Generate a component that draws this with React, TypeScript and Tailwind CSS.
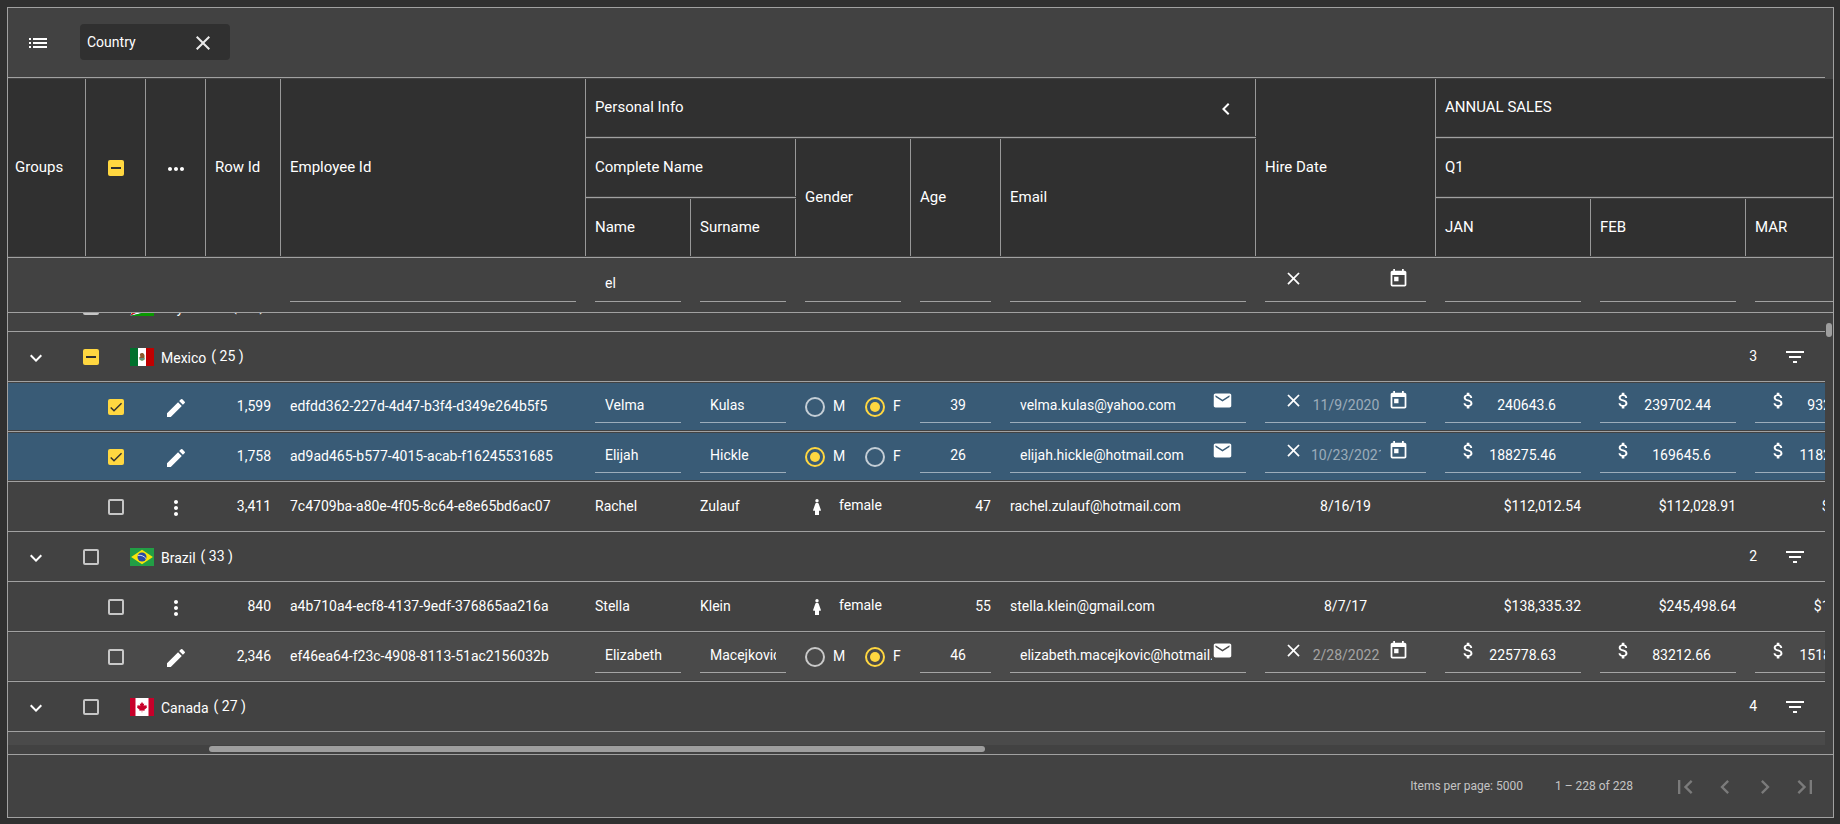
import React, { useEffect, useRef } from "react";
import {
  MdAttachMoney,
  MdChevronLeft,
  MdChevronRight,
  MdClose,
  MdCreate,
  MdEmail,
  MdExpandMore,
  MdFilterList,
  MdFirstPage,
  MdLastPage,
  MdList,
  MdMoreHoriz,
  MdMoreVert,
  MdToday,
} from "react-icons/md";

type Gender = "M" | "F";

interface Employee {
  kind: "row";
  rowId: string;
  id: string;
  name: string;
  surname: string;
  gender: Gender;
  age: number;
  email: string;
  hired: string;
  sales: [string, string, string];
  editing?: boolean;
  selected?: boolean;
  striped?: boolean;
}

interface Group {
  kind: "group";
  country: string;
  total: number;
  filtered: number;
  partial?: boolean;
}

const rows: (Employee | Group)[] = [
  { kind: "group", country: "Seychelles", total: 21, filtered: 0 },
  { kind: "group", country: "Mexico", total: 25, filtered: 3, partial: true },
  {
    kind: "row", rowId: "1,599", id: "edfdd362-227d-4d47-b3f4-d349e264b5f5", name: "Velma", surname: "Kulas",
    gender: "F", age: 39, email: "velma.kulas@yahoo.com", hired: "11/9/2020",
    sales: ["240643.6", "239702.44", "93216.42"], editing: true, selected: true,
  },
  {
    kind: "row", rowId: "1,758", id: "ad9ad465-b577-4015-acab-f16245531685", name: "Elijah", surname: "Hickle",
    gender: "M", age: 26, email: "elijah.hickle@hotmail.com", hired: "10/23/2021",
    sales: ["188275.46", "169645.6", "118254.31"], editing: true, selected: true,
  },
  {
    kind: "row", rowId: "3,411", id: "7c4709ba-a80e-4f05-8c64-e8e65bd6ac07", name: "Rachel", surname: "Zulauf",
    gender: "F", age: 47, email: "rachel.zulauf@hotmail.com", hired: "8/16/19",
    sales: ["$112,012.54", "$112,028.91", "$94,310.27"],
  },
  { kind: "group", country: "Brazil", total: 33, filtered: 2 },
  {
    kind: "row", rowId: "840", id: "a4b710a4-ecf8-4137-9edf-376865aa216a", name: "Stella", surname: "Klein",
    gender: "F", age: 55, email: "stella.klein@gmail.com", hired: "8/7/17",
    sales: ["$138,335.32", "$245,498.64", "$130,274.05"],
  },
  {
    kind: "row", rowId: "2,346", id: "ef46ea64-f23c-4908-8113-51ac2156032b", name: "Elizabeth", surname: "Macejkovic",
    gender: "F", age: 46, email: "elizabeth.macejkovic@hotmail.com", hired: "2/28/2022",
    sales: ["225778.63", "83212.66", "151820.76"], editing: true, striped: true,
  },
  { kind: "group", country: "Canada", total: 27, filtered: 4 },
];

function Columns() {
  return (
    <colgroup>
      <col className="w-[78px]" />
      <col className="w-[60px]" />
      <col className="w-[60px]" />
      <col className="w-[75px]" />
      <col className="w-[305px]" />
      <col className="w-[105px]" />
      <col className="w-[105px]" />
      <col className="w-[115px]" />
      <col className="w-[90px]" />
      <col className="w-[255px]" />
      <col className="w-[180px]" />
      <col className="w-[155px]" />
      <col className="w-[155px]" />
      <col className="w-[155px]" />
    </colgroup>
  );
}

function Checkbox({ label, state = "off" }: { label: string; state?: "off" | "on" | "mixed" }) {
  const ref = useRef<HTMLInputElement>(null);
  useEffect(() => {
    if (ref.current) ref.current.indeterminate = state === "mixed";
  }, [state]);
  return (
    <span className="relative block size-4 shrink-0">
      <input
        ref={ref}
        type="checkbox"
        aria-label={label}
        defaultChecked={state === "on"}
        className={`block size-4 appearance-none rounded-xs ${state === "off" ? "border-2 border-white/70" : "bg-[#ffd740]"}`}
      />
      {state !== "off" && (
        <svg viewBox="0 0 24 24" className="pointer-events-none absolute inset-0 size-4" fill="none" stroke="#303030">
          {state === "on" ? (
            <path d="M4.1 12.7 9 17.6 20.3 6.3" strokeWidth="2.2" />
          ) : (
            <path d="M4.5 12h15" strokeWidth="3" />
          )}
        </svg>
      )}
    </span>
  );
}

function Flag({ country }: { country: string }) {
  return (
    <svg viewBox="0 0 24 18" className="h-[18px] w-6 shrink-0" aria-hidden="true">
      {country === "Mexico" && (
        <>
          <path d="M0 0h24v18H0z" fill="#fff" />
          <path d="M0 0h8v18H0z" fill="#00702c" />
          <path d="M16 0h8v18h-8z" fill="#c10000" />
          <path d="M8.800 8.800a3.400 3.400 0 0 0 6.400 0l-.7 3-2.500 1.100-2.500-1.100z" fill="#6f9a5c" />
          <path d="M9.800 6.200c1-1.600 3.500-1.500 4.300.1.900 1.600.5 3.700-.6 4.600l-1.500.4-1.800-.6-1-1.200 1.200-1z" fill="#8b5a2b" />
          <path d="M10.200 10.200h3.600v1.200h-3.600z" fill="#56a0a0" />
        </>
      )}
      {country === "Brazil" && (
        <>
          <path d="M0 0h24v18H0z" fill="#229e45" />
          <path d="M12 1.800 22.900 9 12 16.200 1.100 9z" fill="#f8e509" />
          <circle cx="12" cy="9" r="4.500" fill="#2b49a3" />
          <path d="M7.900 7.400c3-.5 6 .5 8.100 3.200" stroke="#fff" strokeWidth=".8" fill="none" />
        </>
      )}
      {country === "Canada" && (
        <>
          <path d="M0 0h24v18H0z" fill="#fff" />
          <path d="M0 0h5.500v18H0zM18.500 0H24v18h-5.500z" fill="#c8002a" />
          <path
            d="m12 3.800 1.100 2.100 1.100-.6-.5 3 1.500-1.500.4.900 1.500-.3-.6 1.700.6.400-2.700 2.300.3 1-2.500-.4v2.100h-.4v-2.100l-2.500.4.3-1-2.700-2.300.6-.400-.6-1.700 1.500.3.400-.900 1.500 1.500-.5-3 1.100.6z"
            fill="#c8002a"
          />
        </>
      )}
      {country === "Seychelles" && (
        <>
          <path d="M0 0h24v18H0z" fill="#00319c" />
          <path d="M0 18 8 0h8z" fill="#ffdc42" />
          <path d="M0 18 16 0h8v6z" fill="#de0008" />
          <path d="M0 18 24 6v6z" fill="#fff" />
          <path d="M0 18 24 12v6z" fill="#099900" />
        </>
      )}
    </svg>
  );
}

function Woman() {
  return (
    <svg viewBox="0 0 8 16" className="h-4 w-2 shrink-0" fill="#fff" aria-hidden="true">
      <circle cx="4" cy="1.700" r="1.700" />
      <path d="M3.200 4h1.600c.5 0 .7.200.8.600L7.900 11c.1.500-.1.800-.5.800H6V16H2v-4.200H.6c-.4 0-.6-.3-.5-.8l2.300-6.400c.1-.4.3-.6.8-.6z" />
    </svg>
  );
}

interface HeadProps {
  children?: React.ReactNode;
  rowSpan?: number;
  colSpan?: number;
  className?: string;
  last?: boolean;
}

const headHeight: Record<number, string> = { 1: "h-[57px]", 2: "h-[117px]", 3: "h-[177px]" };

function Head({ children, rowSpan = 1, colSpan, className = "px-[9px] pb-px", last }: HeadProps) {
  return (
    <th rowSpan={rowSpan} colSpan={colSpan} className="border-b border-white/50 bg-[#303030] bg-clip-content py-px font-normal">
      <div className={`flex items-center ${headHeight[rowSpan]} ${last ? "" : "border-r border-white/50"} ${className}`}>
        {children}
      </div>
    </th>
  );
}

function FilterCell({ label, value = "" }: { label: string; value?: string }) {
  return (
    <td className="pt-3 pr-2.5 pl-[9px]">
      <input
        aria-label={`Filter ${label}`}
        defaultValue={value}
        className="block h-8 w-full border-b border-white/50 bg-transparent px-2.5 pb-[5px] outline-none"
      />
    </td>
  );
}

/* Text cells sit one pixel above cells that hold icons and fields. */
const textCell = "pb-px";
const controlCell = "pt-px";

function Cell({ children, tint, className = textCell }: { children?: React.ReactNode; tint: string; className?: string }) {
  return (
    <td className={`border-b border-white/50 bg-clip-content py-px ${tint}`}>
      <div className={`flex h-[47px] items-center pr-2.5 pl-[9px] ${className}`}>{children}</div>
    </td>
  );
}

const field = "mb-px flex h-[33px] w-full border-b border-white/50";
const textInput = "h-[30px] w-full min-w-0 bg-transparent outline-none";

function TextField({ label, value, icon }: { label: string; value: string; icon?: React.ReactNode }) {
  return (
    <div className={`${field} ${icon ? "pr-[13px]" : "pr-2.5"} pl-2.5`}>
      <input aria-label={label} defaultValue={value} className={textInput} />
      {icon}
    </div>
  );
}

function NumberField({ label, value, money }: { label: string; value: string; money?: boolean }) {
  return (
    <div className={`${field} pr-[25px] ${money ? "pl-[13px]" : ""}`}>
      {money && <MdAttachMoney className="size-[21px] shrink-0" />}
      <input aria-label={label} defaultValue={value} inputMode="decimal" className={`${textInput} text-right`} />
    </div>
  );
}

function DateField({ label, value, className }: { label: string; value: string; className: string }) {
  return (
    <div className={`flex w-full items-start justify-between border-b border-white/50 pr-[17px] pl-[18px] ${className}`}>
      <button aria-label={`Clear ${label}`} className="size-[21px]">
        <MdClose className="size-[21px]" />
      </button>
      <input aria-label={label} value={value} disabled className="h-[30px] w-[70px] bg-transparent text-center text-white/50" />
      <button aria-label={`Open calendar for ${label}`} className="size-[21px]">
        <MdToday className="size-[21px]" />
      </button>
    </div>
  );
}

function GenderField({ value, name }: { value: Gender; name: string }) {
  return (
    <>
      {(["M", "F"] as Gender[]).map((g) => (
        <label key={g} className="flex w-[60px] shrink-0 items-center gap-2">
          <span className="relative block size-5">
            <input
              type="radio"
              name={name}
              defaultChecked={g === value}
              className={`block size-5 appearance-none rounded-full border-2 ${g === value ? "border-[#ffd740]" : "border-white/70"}`}
            />
            {g === value && <span className="pointer-events-none absolute inset-[5px] rounded-full bg-[#ffd740]" />}
          </span>
          <span className="pb-0.5">{g}</span>
        </label>
      ))}
    </>
  );
}

function EmployeeRow({ e }: { e: Employee }) {
  const tint = e.selected ? "bg-[#395b76]" : e.striped ? "bg-[#4a4a4a]" : "";
  const months = ["January", "February", "March"];
  return (
    <tr>
      <Cell tint={tint} />
      <td className={`border-b border-white/50 bg-clip-content py-px ${tint}`}>
        <div className="flex h-[47px] items-center justify-center pt-px">
          <Checkbox label={`Select row ${e.rowId}`} state={e.selected ? "on" : "off"} />
        </div>
      </td>
      <Cell tint={tint} className="justify-center pt-px">
        <button aria-label={e.editing ? "Edit row" : "Row actions"} className="pt-0.5">
          {e.editing ? <MdCreate className="size-6" /> : <MdMoreVert className="size-6" />}
        </button>
      </Cell>
      <Cell tint={tint} className="justify-end pb-px">{e.rowId}</Cell>
      <Cell tint={tint}>{e.id}</Cell>
      {e.editing ? (
        <>
          <Cell tint={tint} className={controlCell}><TextField label="Name" value={e.name} /></Cell>
          <Cell tint={tint} className={controlCell}><TextField label="Surname" value={e.surname} /></Cell>
          <Cell tint={tint} className={controlCell}><GenderField value={e.gender} name={`gender-${e.rowId}`} /></Cell>
          <Cell tint={tint} className={controlCell}><NumberField label="Age" value={String(e.age)} /></Cell>
          <Cell tint={tint} className={controlCell}>
            <TextField label="Email" value={e.email} icon={<MdEmail className="size-[21px] shrink-0" />} />
          </Cell>
          <Cell tint={tint} className={controlCell}><DateField label="Hire date" value={e.hired} className="mb-px h-[33px]" /></Cell>
          {e.sales.map((s, i) => (
            <Cell key={i} tint={tint} className={controlCell}><NumberField label={months[i]} value={s} money /></Cell>
          ))}
        </>
      ) : (
        <>
          <Cell tint={tint}>{e.name}</Cell>
          <Cell tint={tint}>{e.surname}</Cell>
          <Cell tint={tint} className={controlCell}>
            <span className="flex items-center gap-[18px] pl-2">
              <Woman />
              <span className="pb-1">female</span>
            </span>
          </Cell>
          <Cell tint={tint} className="justify-end pb-px">{e.age}</Cell>
          <Cell tint={tint}>{e.email}</Cell>
          <Cell tint={tint} className="justify-center pb-px">{e.hired}</Cell>
          {e.sales.map((s, i) => (
            <Cell key={i} tint={tint} className="justify-end pb-px">{s}</Cell>
          ))}
        </>
      )}
    </tr>
  );
}

function GroupRow({ g }: { g: Group }) {
  return (
    <tr>
      <td colSpan={14} className="border-b border-white/50">
        <div className="flex h-[49px] w-[100cqw] items-center pt-px pr-[18px] pl-4">
          <button aria-label={`Collapse ${g.country}`} className="mr-[35px] pt-0.5">
            <MdExpandMore className="size-6" />
          </button>
          <Checkbox label={`Select ${g.country}`} state={g.partial ? "mixed" : "off"} />
          <span className="ml-[31px] flex items-center">
            <Flag country={g.country} />
            <span className="ml-[7px] pt-0.5">{g.country}</span>
            <span className="ml-[5px] pb-0.5 whitespace-pre">( {g.total} )</span>
          </span>
          <span className="mr-[26px] ml-auto pb-0.5">{g.filtered}</span>
          <button aria-label={`Filter ${g.country}`}>
            <MdFilterList className="size-6" />
          </button>
        </div>
      </td>
    </tr>
  );
}

const tableClass = "w-[1893px] min-w-full table-fixed border-separate border-spacing-0 text-left";
const pageButton = "flex size-10 items-center justify-center";

export default function App() {
  return (
    <div className="min-h-screen bg-[#303030] pt-[7px] pr-1.5 pb-1.5 pl-[7px] font-['Roboto',sans-serif] text-sm text-white">
      <main className="border border-white/50 bg-[#424242]">
        <header className="mr-2 flex items-center border-b border-white/50 pt-4 pb-[17px] pl-[18px]">
          <button aria-label="Grouping options" className="mr-[30px] pt-0.5">
            <MdList className="size-6" />
          </button>
          <div className="flex h-9 w-[150px] items-center justify-between rounded bg-[#303030] pr-[15px] pl-[7px]">
            Country
            <button aria-label="Remove Country" className="pt-0.5 text-white/90">
              <MdClose className="size-6" />
            </button>
          </div>
        </header>

        <div className="overflow-hidden">
          <table className={tableClass}>
            <Columns />
            <thead className="text-[15px] leading-5">
              <tr>
                <Head rowSpan={3} className="px-[7px] pb-px">Groups</Head>
                <Head rowSpan={3} className="justify-center pt-px pl-px">
                  <Checkbox label="Select all" state="mixed" />
                </Head>
                <Head rowSpan={3} className="justify-center pt-px">
                  <button aria-label="All row actions" className="pt-0.5">
                    <MdMoreHoriz className="size-6" />
                  </button>
                </Head>
                <Head rowSpan={3}>Row Id</Head>
                <Head rowSpan={3}>Employee Id</Head>
                <Head colSpan={5} className="justify-between pr-[17px] pb-px pl-[9px]">
                  Personal Info
                  <button aria-label="Collapse Personal Info" className="pt-1">
                    <MdChevronLeft className="size-6" />
                  </button>
                </Head>
                <Head rowSpan={3}>Hire Date</Head>
                <Head colSpan={3} last>ANNUAL SALES</Head>
              </tr>
              <tr>
                <Head colSpan={2}>Complete Name</Head>
                <Head rowSpan={2}>Gender</Head>
                <Head rowSpan={2}>Age</Head>
                <Head rowSpan={2}>Email</Head>
                <Head colSpan={3} last>Q1</Head>
              </tr>
              <tr>
                <Head>Name</Head>
                <Head>Surname</Head>
                <Head>JAN</Head>
                <Head>FEB</Head>
                <Head>MAR</Head>
              </tr>
            </thead>
            <tbody>
              <tr className="h-[54px] align-top">
                <td colSpan={4} />
                <FilterCell label="Employee Id" />
                <FilterCell label="Name" value="el" />
                <FilterCell label="Surname" />
                <FilterCell label="Gender" />
                <FilterCell label="Age" />
                <FilterCell label="Email" />
                <td className="pt-2.5 pr-2.5 pl-[9px]">
                  <DateField label="hire date filter" value="" className="h-[34px]" />
                </td>
                <FilterCell label="January" />
                <FilterCell label="February" />
                <FilterCell label="March" />
              </tr>
            </tbody>
          </table>
        </div>

        <div className="flex border-t border-white/50">
          <div className="@container h-[432px] min-w-0 flex-1 overflow-hidden">
            <table className={`${tableClass} -mt-[31px]`}>
              <Columns />
              <tbody>
                {rows.map((r, i) => (r.kind === "group" ? <GroupRow key={i} g={r} /> : <EmployeeRow key={i} e={r} />))}
                <tr className="h-[50px]">
                  <td colSpan={14} className="bg-[#4a4a4a]" />
                </tr>
              </tbody>
            </table>
          </div>
          <div className="w-2 px-px pt-2.5">
            <div className="h-3.5 rounded-full bg-[#9e9e9e]" />
          </div>
        </div>

        <div className="mr-2 ml-[198px] pt-px pb-0.5 pl-[3px]">
          <div className="h-1.5 w-[48%] rounded-full bg-[#9e9e9e]" />
        </div>

        <footer className="flex h-[63px] items-center justify-end border-t border-white/50 pr-2 text-xs text-white/70">
          <span>Items per page: 5000</span>
          <span className="mx-8">1 – 228 of 228</span>
          <nav className="flex pt-0.5 text-white/30" aria-label="Pages">
            <button disabled aria-label="First page" className={pageButton}><MdFirstPage className="size-7" /></button>
            <button disabled aria-label="Previous page" className={pageButton}><MdChevronLeft className="size-7" /></button>
            <button disabled aria-label="Next page" className={pageButton}><MdChevronRight className="size-7" /></button>
            <button disabled aria-label="Last page" className={pageButton}><MdLastPage className="size-7" /></button>
          </nav>
        </footer>
      </main>
    </div>
  );
}
